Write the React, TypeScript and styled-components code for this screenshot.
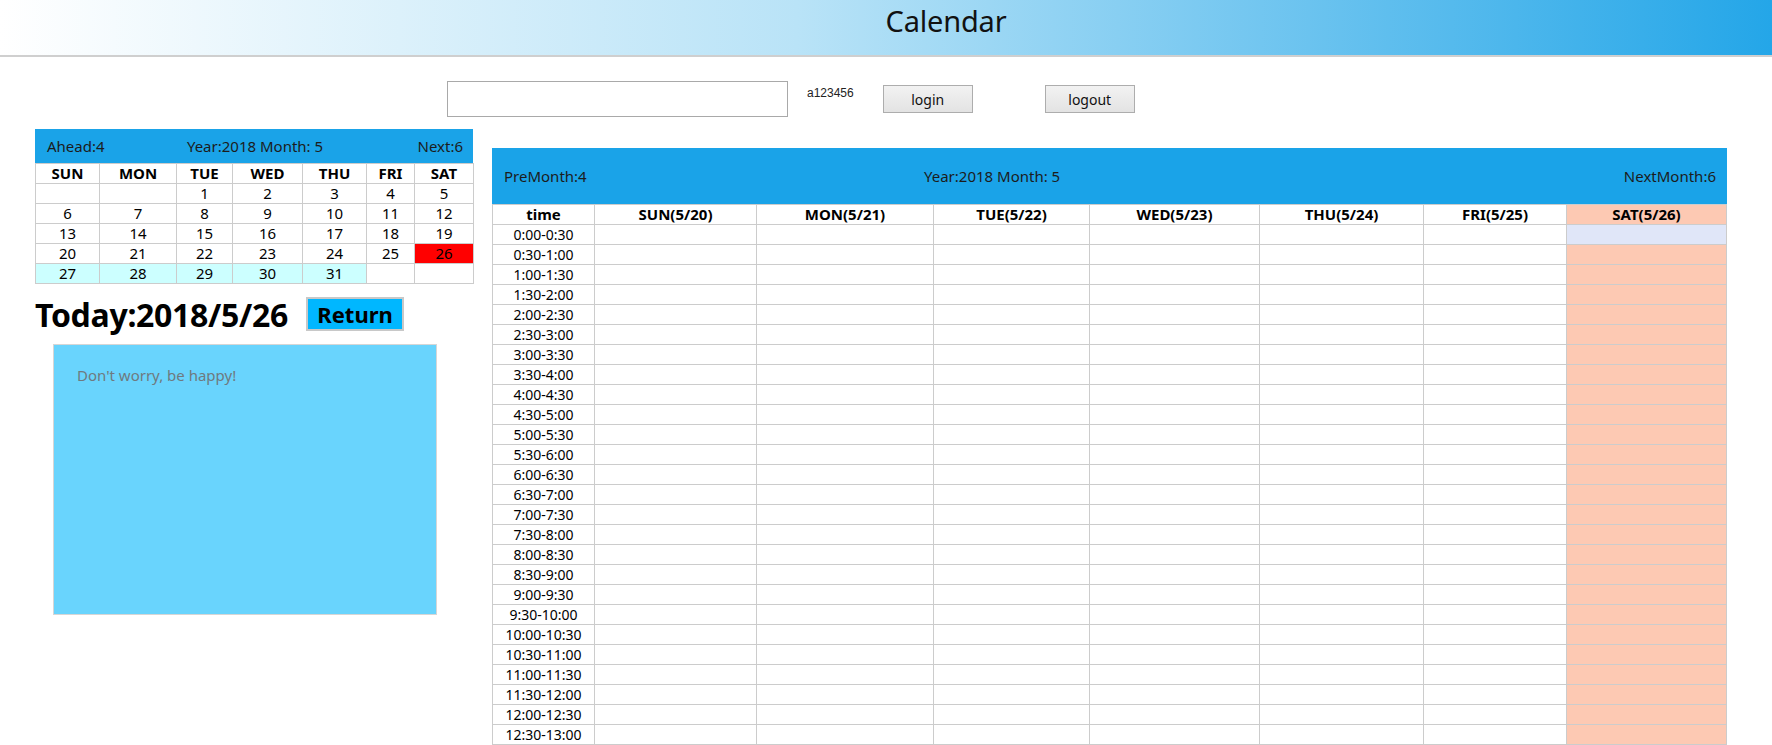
import React from "react";
import styled, { createGlobalStyle } from "styled-components";

const Global = createGlobalStyle`
  html, body { margin: 0; padding: 0; background: #fff; }
  body { font-family: "Noto Sans", "Open Sans", sans-serif; color: #000; }
  #root { height: 745px; overflow: hidden; }
`;

const Page = styled.div`
  display: flex;
  flex-direction: column;
`;

const Header = styled.header`
  height: 54px;
  border-bottom: 2px solid #cfcfcf;
  background: linear-gradient(to right, #ffffff 0%, #b9e3f7 45%, #24a6e8 100%);
  display: flex;
  align-items: flex-start;
  justify-content: center;
  padding: 1px 0 0 120px;
  box-sizing: content-box;
`;

const Title = styled.h1`
  margin: 0;
  font-size: 29px;
  line-height: 40px;
  font-weight: 400;
  color: #111;
  letter-spacing: -0.2px;
`;

const Controls = styled.div`
  display: flex;
  align-items: flex-start;
  padding: 24px 0 0 447px;
  height: 60px;
  box-sizing: border-box;
`;

const TextInput = styled.input`
  width: 341px;
  height: 36px;
  box-sizing: border-box;
  border: 1px solid #a9a9a9;
  outline: none;
  margin: 0;
`;

const UserLabel = styled.span`
  font-family: "Liberation Sans", Arial, sans-serif;
  font-size: 12px;
  color: #222;
  margin: 5px 0 0 19px;
`;

const Btn = styled.button<{ $ml: number }>`
  margin: 4px 0 0 ${(p) => p.$ml}px;
  width: 90px;
  height: 28px;
  border: 1px solid #adadad;
  background: linear-gradient(to bottom, #f2f2f2, #e3e3e3);
  font-family: "Noto Sans", sans-serif;
  font-size: 14px;
  color: #111;
  padding: 0;
`;

const Main = styled.div`
  display: flex;
  align-items: flex-start;
  padding: 12px 0 0 35px;
  gap: 19px;
`;

const LeftCol = styled.div`
  width: 438px;
  display: flex;
  flex-direction: column;
`;

const BlueBar = styled.div<{ $h: number }>`
  height: ${(p) => p.$h}px;
  background: #1aa3e8;
  color: #1c1c1c;
  font-size: 15px;
  display: grid;
  align-items: center;
`;

const MiniBar = styled(BlueBar)`
  grid-template-columns: 1fr auto 1fr;
  padding: 0 10px 0 12px;
`;

const BigBar = styled(BlueBar)`
  grid-template-columns: 420px auto 1fr;
  padding: 0 11px 0 12px;
`;

const BarEnd = styled.span`
  justify-self: end;
`;

const Table = styled.table`
  border-collapse: collapse;
  table-layout: fixed;
`;

const MiniTable = styled(Table)`
  width: 438px;
`;

const BigTable = styled(Table)`
  width: 1234px;
`;

const Cell = styled.td<{ $bg?: string; $fs?: number }>`
  border: 1px solid #cccccc;
  height: 19px;
  padding: 0;
  text-align: center;
  font-size: ${(p) => p.$fs ?? 14}px;
  line-height: 19px;
  background: ${(p) => p.$bg ?? "transparent"};
  white-space: nowrap;
  overflow: hidden;
`;

const HeadCell = styled.th<{ $bg?: string }>`
  border: 1px solid #cccccc;
  height: 19px;
  padding: 0;
  text-align: center;
  font-size: 15px;
  font-weight: 700;
  line-height: 19px;
  background: ${(p) => p.$bg ?? "transparent"};
  white-space: nowrap;
`;

const TodayRow = styled.div`
  display: flex;
  align-items: center;
  gap: 18px;
  margin-top: 12px;
  height: 36px;
`;

const TodayText = styled.h2`
  margin: 0;
  font-size: 32px;
  font-weight: 700;
  letter-spacing: -0.3px;
`;

const ReturnBtn = styled.button`
  height: 34px;
  width: 98px;
  border: 2px solid #c8c8c8;
  background: #00b7ff;
  font-family: "Noto Sans", sans-serif;
  font-size: 22px;
  font-weight: 700;
  color: #000;
  padding: 0;
  line-height: 28px;
`;

const Note = styled.div`
  margin: 12px 0 0 18px;
  width: 384px;
  height: 271px;
  box-sizing: border-box;
  border: 1px solid #d6d6d6;
  background: #69d4fd;
  padding: 20px 23px;
  font-size: 15px;
  color: #6f7a80;
`;

const RightCol = styled.div`
  margin-top: 19px;
  display: flex;
  flex-direction: column;
`;

const miniCols = [64, 77, 56, 70, 64, 48, 59];
const miniDays = ["SUN", "MON", "TUE", "WED", "THU", "FRI", "SAT"];
const weeks: (number | null)[][] = [
  [null, null, 1, 2, 3, 4, 5],
  [6, 7, 8, 9, 10, 11, 12],
  [13, 14, 15, 16, 17, 18, 19],
  [20, 21, 22, 23, 24, 25, 26],
  [27, 28, 29, 30, 31, null, null],
];

const bigCols = [102, 162, 177, 156, 170, 164, 143, 160];
const bigHeads = ["time", "SUN(5/20)", "MON(5/21)", "TUE(5/22)", "WED(5/23)", "THU(5/24)", "FRI(5/25)", "SAT(5/26)"];

const slots: string[] = [];
for (let i = 0; i < 26; i++) {
  const h1 = Math.floor(i / 2);
  const m1 = i % 2 === 0 ? "00" : "30";
  const h2 = i % 2 === 0 ? h1 : h1 + 1;
  const m2 = i % 2 === 0 ? "30" : "00";
  slots.push(`${h1}:${m1}-${h2}:${m2}`);
}

const PEACH = "#fdc9b3";

export default function App() {
  return (
    <Page>
      <Global />
      <Header>
        <Title>Calendar</Title>
      </Header>
      <Controls>
        <TextInput type="text" />
        <UserLabel>a123456</UserLabel>
        <Btn $ml={29}>login</Btn>
        <Btn $ml={72}>logout</Btn>
      </Controls>
      <Main>
        <LeftCol>
          <MiniBar $h={34}>
            <span>Ahead:4</span>
            <span>Year:2018 Month: 5</span>
            <BarEnd>Next:6</BarEnd>
          </MiniBar>
          <MiniTable>
            <colgroup>
              {miniCols.map((w, i) => (
                <col key={i} style={{ width: w }} />
              ))}
            </colgroup>
            <thead>
              <tr>
                {miniDays.map((d) => (
                  <HeadCell key={d}>{d}</HeadCell>
                ))}
              </tr>
            </thead>
            <tbody>
              {weeks.map((w, wi) => (
                <tr key={wi}>
                  {w.map((d, di) => {
                    let bg: string | undefined;
                    if (d === 26) bg = "#ff0000";
                    else if (wi === 4 && d !== null) bg = "#ccffff";
                    return (
                      <Cell key={di} $bg={bg} $fs={15}>
                        {d ?? ""}
                      </Cell>
                    );
                  })}
                </tr>
              ))}
            </tbody>
          </MiniTable>
          <TodayRow>
            <TodayText>Today:2018/5/26</TodayText>
            <ReturnBtn>Return</ReturnBtn>
          </TodayRow>
          <Note>Don't worry, be happy!</Note>
        </LeftCol>
        <RightCol>
          <BigBar $h={56}>
            <span>PreMonth:4</span>
            <span>Year:2018 Month: 5</span>
            <BarEnd>NextMonth:6</BarEnd>
          </BigBar>
          <BigTable>
            <colgroup>
              {bigCols.map((w, i) => (
                <col key={i} style={{ width: w }} />
              ))}
            </colgroup>
            <thead>
              <tr>
                {bigHeads.map((h, i) => (
                  <HeadCell key={h} $bg={i === 7 ? PEACH : undefined}>
                    {h}
                  </HeadCell>
                ))}
              </tr>
            </thead>
            <tbody>
              {slots.map((s, si) => (
                <tr key={s}>
                  <Cell>{s}</Cell>
                  {[0, 1, 2, 3, 4, 5, 6].map((c) => (
                    <Cell key={c} $bg={c === 6 ? (si === 0 ? "#e0e6f8" : PEACH) : undefined} />
                  ))}
                </tr>
              ))}
            </tbody>
          </BigTable>
        </RightCol>
      </Main>
    </Page>
  );
}
